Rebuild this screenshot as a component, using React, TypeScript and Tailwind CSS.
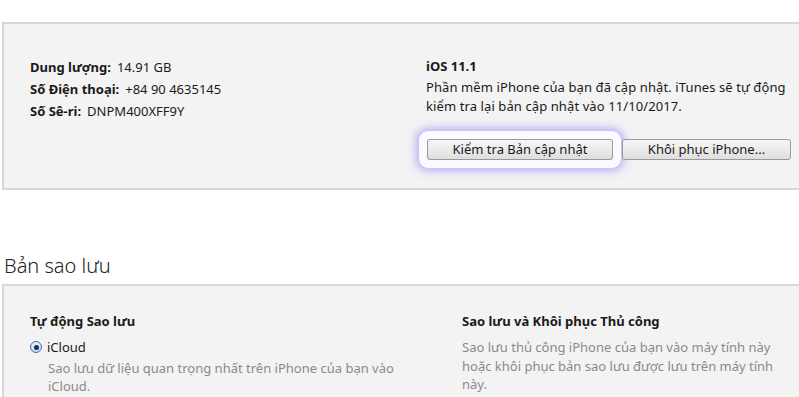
import React from 'react'

/**
 * Summary row: bold label + value
 */
function InfoRow({ label, value }: { label: string; value: string }) {
  return (
    <div className="flex gap-[6px] leading-[22px]">
      <span className="font-bold">{label}</span>
      <span>{value}</span>
    </div>
  )
}

function ItunesButton({ children, focused }: { children: React.ReactNode; focused?: boolean }) {
  return (
    <button
      className={
        'h-[21px] rounded-[3px] border border-[#9a9a9a] bg-gradient-to-b from-[#f7f7f7] to-[#dedede] text-[13px] leading-[19px] text-[#1a1a1a] ' +
        (focused
          ? 'w-[186px] shadow-[0_0_0_8px_#fafaff,0_0_10px_10px_rgba(110,100,255,0.55)]'
          : 'w-[169px]')
      }
    >
      {children}
    </button>
  )
}

export default function App() {
  return (
    <div
      className="h-[397px] w-[799px] overflow-hidden bg-white pt-[22px] text-[13px] text-[#1a1a1a]"
      style={{ fontFamily: '"Noto Sans", "Open Sans", sans-serif' }}
    >
      {/* Summary panel */}
      <div className="ml-[2px] flex h-[168px] border-2 border-r-0 border-[#d8d8d8] bg-[#f3f3f3] pt-[32px]">
        <div className="w-[422px] pl-[26px]">
          <InfoRow label="Dung lượng:" value="14.91 GB" />
          <InfoRow label="Số Điện thoại:" value="+84 90 4635145" />
          <InfoRow label="Số Sê-ri:" value="DNPM400XFF9Y" />
        </div>
        <div className="pt-[1px]">
          <div className="font-bold leading-[19px]">iOS 11.1</div>
          <p className="mt-[2px] w-[370px] leading-[19px] tracking-[0.1px]">
            Phần mềm iPhone của bạn đã cập nhật. iTunes sẽ tự động kiểm tra lại bản cập nhật vào 11/10/2017.
          </p>
          <div className="mt-[23px] flex gap-[9px] pl-[1px]">
            <ItunesButton focused>Kiểm tra Bản cập nhật</ItunesButton>
            <ItunesButton>Khôi phục iPhone...</ItunesButton>
          </div>
        </div>
      </div>

      {/* Backups */}
      <h2 className="mt-[62px] pl-[4px] text-[20px] leading-[28px] font-light text-[#222]">Bản sao lưu</h2>
      <div className="ml-[2px] mt-[4px] flex h-[140px] border-2 border-r-0 border-b-0 border-[#d8d8d8] bg-[#f3f3f3] pt-[25px]">
        <div className="w-[458px] pl-[26px]">
          <div className="font-bold leading-[20px]">Tự động Sao lưu</div>
          <label className="mt-[6px] flex items-center gap-[5px] leading-[20px]">
            <span className="flex h-[12px] w-[12px] items-center justify-center rounded-full border border-[#3c6fb4] bg-gradient-to-b from-[#e6f0fb] to-[#c7dcf3]">
              <span className="h-[5px] w-[5px] rounded-full bg-[#1b2f4f]" />
            </span>
            <span>iCloud</span>
          </label>
          <p className="mt-[2px] w-[380px] pl-[18px] leading-[18px] text-[#8a8a8a]">
            Sao lưu dữ liệu quan trọng nhất trên iPhone của bạn vào iCloud.
          </p>
        </div>
        <div>
          <div className="font-bold leading-[20px]">Sao lưu và Khôi phục Thủ công</div>
          <p className="mt-[7px] w-[325px] leading-[18.5px] text-[#8a8a8a]">
            Sao lưu thủ công iPhone của bạn vào máy tính này hoặc khôi phục bản sao lưu được lưu trên máy tính này.
          </p>
        </div>
      </div>
    </div>
  )
}
